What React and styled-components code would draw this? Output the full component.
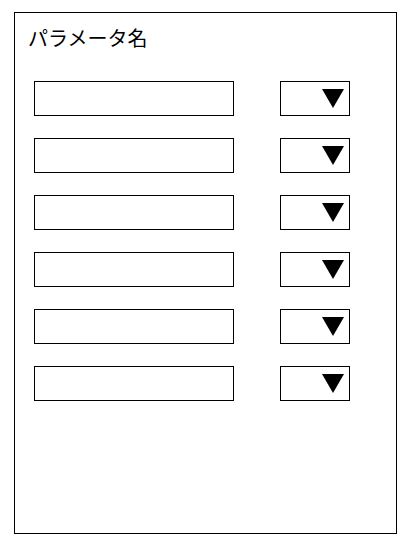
import React from 'react';
import styled, { createGlobalStyle } from 'styled-components';

const GlobalStyle = createGlobalStyle`
  body {
    margin: 0;
    background: #fff;
    font-family: "Noto Sans CJK JP", "Noto Sans", sans-serif;
  }
`;

const Panel = styled.div`
  box-sizing: border-box;
  width: 383px;
  height: 522px;
  margin: 12px 0 0 14px;
  border: 1px solid #000;
  padding: 13px 0 0 19px;
`;

const Title = styled.div`
  font-size: 20px;
  line-height: 24px;
  color: #000;
  margin-left: -6px;
  margin-bottom: 31px;
`;

const Rows = styled.div`
  display: flex;
  flex-direction: column;
  gap: 22px;
`;

const Row = styled.div`
  display: flex;
  align-items: center;
  gap: 46px;
`;

const TextBox = styled.input`
  box-sizing: border-box;
  width: 200px;
  height: 35px;
  margin: 0;
  border: 1px solid #000;
  border-radius: 0;
  padding: 0 6px;
  font-size: 16px;
  outline: none;
`;

const Select = styled.div`
  box-sizing: border-box;
  width: 70px;
  height: 35px;
  border: 1px solid #000;
  display: flex;
  align-items: center;
  justify-content: flex-end;
  padding-right: 5px;
`;

const Arrow = () => (
  <svg width="22" height="19" viewBox="0 0 22 19">
    <polygon points="0,0 22,0 11,19" fill="#000" />
  </svg>
);

const App = () => {
  const rows = [0, 1, 2, 3, 4, 5];
  return (
    <>
      <GlobalStyle />
      <Panel>
        <Title>パラメータ名</Title>
        <Rows>
          {rows.map((i) => (
            <Row key={i}>
              <TextBox type="text" />
              <Select>
                <Arrow />
              </Select>
            </Row>
          ))}
        </Rows>
      </Panel>
    </>
  );
};

export default App;
